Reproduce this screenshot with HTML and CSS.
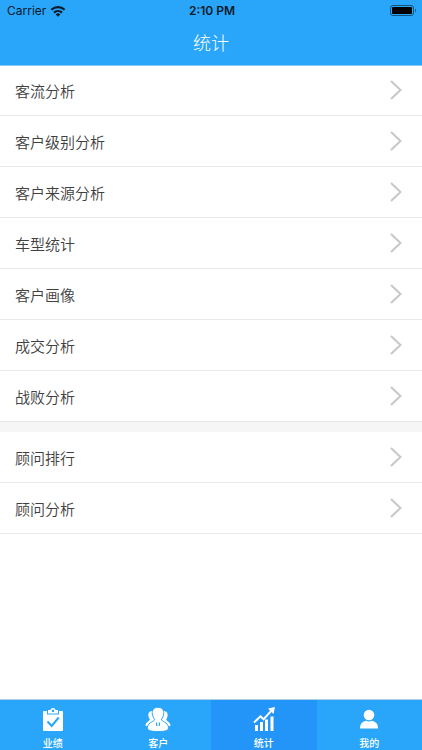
FILE: index.html
```html
<!DOCTYPE html>
<html lang="zh-CN">
<head>
<meta charset="utf-8">
<meta name="viewport" content="width=device-width, initial-scale=1">
<title>统计</title>
<link rel="stylesheet" href="styles.css">
</head>
<body>
<div class="app">
  <header class="header">
    <div class="status">
      <div class="carrier">
        <span>Carrier</span>
        <svg class="wifi" viewBox="0 0 16 12" aria-hidden="true">
          <path d="M1.400 4.800a9.400 9.400 0 0 1 13.200 0M4 7.600a5.800 5.800 0 0 1 8 0" fill="none" stroke="currentColor" stroke-width="2.200"/>
          <path d="M5.700 9.400a3.400 3.400 0 0 1 4.600 0L8 11.700z" fill="currentColor"/>
        </svg>
      </div>
      <time class="clock">2:10 PM</time>
      <svg class="battery" viewBox="0 0 27 12" aria-hidden="true">
        <rect x=".5" y=".5" width="23" height="10" rx="2.500" fill="none" stroke="#000" stroke-opacity=".5"/>
        <rect x="2" y="2" width="20" height="7" rx="1" fill="#000"/>
        <path d="M25 3.700c1.600.6 1.600 3 0 3.600z" fill="#000" fill-opacity=".5"/>
      </svg>
    </div>
    <h1 class="title">统计</h1>
  </header>

  <main class="content">
    <nav class="group">
      <a class="row" href="#flow">客流分析<svg class="chevron" viewBox="0 0 12 20" aria-hidden="true"><path d="M1 1l9.500 9L1 19"/></svg></a>
      <a class="row" href="#level">客户级别分析<svg class="chevron" viewBox="0 0 12 20" aria-hidden="true"><path d="M1 1l9.500 9L1 19"/></svg></a>
      <a class="row" href="#source">客户来源分析<svg class="chevron" viewBox="0 0 12 20" aria-hidden="true"><path d="M1 1l9.500 9L1 19"/></svg></a>
      <a class="row" href="#model">车型统计<svg class="chevron" viewBox="0 0 12 20" aria-hidden="true"><path d="M1 1l9.500 9L1 19"/></svg></a>
      <a class="row" href="#portrait">客户画像<svg class="chevron" viewBox="0 0 12 20" aria-hidden="true"><path d="M1 1l9.500 9L1 19"/></svg></a>
      <a class="row" href="#deal">成交分析<svg class="chevron" viewBox="0 0 12 20" aria-hidden="true"><path d="M1 1l9.500 9L1 19"/></svg></a>
      <a class="row" href="#lost">战败分析<svg class="chevron" viewBox="0 0 12 20" aria-hidden="true"><path d="M1 1l9.500 9L1 19"/></svg></a>
    </nav>
    <nav class="group">
      <a class="row" href="#ranking">顾问排行<svg class="chevron" viewBox="0 0 12 20" aria-hidden="true"><path d="M1 1l9.500 9L1 19"/></svg></a>
      <a class="row" href="#advisor">顾问分析<svg class="chevron" viewBox="0 0 12 20" aria-hidden="true"><path d="M1 1l9.500 9L1 19"/></svg></a>
    </nav>
  </main>

  <nav class="tabs">
    <a class="tab" href="#performance">
      <svg class="icon" viewBox="0 0 26 26" aria-hidden="true">
        <path fill="#fff" d="M4 4h3v3.500h12V4h3q1 0 1 1v18q0 1-1 1H4q-1 0-1-1V5q0-1 1-1z"/>
        <path fill="#fff" fill-rule="evenodd" d="M8 6.500V3h2.300Q11 1 13 1t2.700 2H18v3.500zM13 2.500a1.300 1.300 0 1 0 .01 0z"/>
        <path d="M7.500 14.500l4.200 4.500 7-8.500" fill="none" stroke="#29a6fa" stroke-width="2"/>
      </svg>
      <span>业绩</span>
    </a>
    <a class="tab" href="#customers">
      <svg class="icon" viewBox="0 0 26 26" aria-hidden="true">
        <g fill="#fff">
          <path d="M8 4C4.500 3.700 3 6 3.400 8.600c.1 2 .9 3 1.400 3.900.2 1.600-3.800 2-4.300 5.500 0 .8.500 1.200 1.500 1.200h6l4-6z"/>
          <path d="M18 4c3.500-.3 5 2 4.600 4.600-.1 2-.9 3-1.400 3.900-.2 1.600 3.800 2 4.300 5.500 0 .8-.5 1.200-1.500 1.200h-6l-4-6z"/>
          <path stroke="#29a6fa" d="M13 .3c-4.200 0-6.200 2.900-5.700 6.500.3 2.600 1.300 4.200 2.200 5.400.6 2.400-6.600 2.600-7 8.300 0 3 2.500 4 10.500 4s10.500-1 10.500-4c-.4-5.700-7.600-5.900-7-8.300.9-1.200 1.900-2.800 2.200-5.400.5-3.600-1.500-6.500-5.700-6.500z"/>
        </g>
        <path d="M11.500 15.500l.3 3.500M14.500 15.500l-.3 3.500" stroke="#29a6fa" stroke-width="1.200"/>
      </svg>
      <span>客户</span>
    </a>
    <a class="tab tab-active" href="#stats" aria-current="page">
      <svg class="icon" viewBox="0 0 26 26" aria-hidden="true">
        <path fill="#fff" d="M4 18h3v6H4zM9 15h3v9H9zM14 12.500h3V24h-3zM19.500 9.500h3V24h-3zM17 1.500L24 0l-1.500 7z"/>
        <path d="M3 15.500l6.500-6.200 3 3L21 3" fill="none" stroke="#fff" stroke-width="2"/>
      </svg>
      <span>统计</span>
    </a>
    <a class="tab" href="#me">
      <svg class="icon" viewBox="0 0 26 26" aria-hidden="true">
        <circle cx="13" cy="8" r="5.300" fill="#fff"/>
        <path fill="#fff" d="M4 21.500c0-4.500 2-7 6-7.800q3 1.600 6 0c4 .8 6 3.300 6 7.800z"/>
      </svg>
      <span>我的</span>
    </a>
  </nav>
</div>
</body>
</html>
```
FILE: styles.css
```css
* {
  box-sizing: border-box;
}

body {
  margin: 0;
  background: #fff;
  color: #404040;
  font-family: "Noto Sans CJK SC", sans-serif;
}

a {
  color: inherit;
  text-decoration: none;
}

.app {
  display: flex;
  flex-direction: column;
  min-height: 100vh;
}

.header {
  position: relative;
  background: #29a6fa;
  box-shadow: 0 1px 0 #86ccfb;
}

.status {
  display: grid;
  grid-template-columns: 1fr auto 1fr;
  align-items: center;
  height: 22px;
  padding: 0 5px 0 7px;
  color: #0b1a28;
  font-family: Inter, sans-serif;
  font-size: 12px;
  line-height: 22px;
}

.carrier {
  display: flex;
  align-items: center;
  gap: 4px;
}

.wifi {
  width: 16px;
  height: 12px;
}

.clock {
  font-weight: 600;
}

.battery {
  justify-self: end;
  width: 27px;
  height: 12px;
}

.title {
  margin: 0;
  padding-bottom: 2px;
  color: #fff;
  font-size: 18px;
  font-weight: 300;
  line-height: 41px;
  text-align: center;
}

.content {
  flex: 1;
}

.group + .group {
  border-top: 10px solid #f6f6f6;
}

.row {
  display: flex;
  align-items: center;
  justify-content: space-between;
  height: 51px;
  padding: 0 20px 0 15px;
  border-bottom: 1px solid #e9e9e9;
  font-size: 15px;
  font-weight: 350;
}

.chevron {
  width: 12px;
  height: 20px;
  fill: none;
  stroke: #c7c7cc;
  stroke-width: 2;
}

.tabs {
  position: sticky;
  bottom: 0;
  display: grid;
  grid-template-columns: repeat(4, 1fr);
  border-top: 1px solid #a9cfe8;
}

.tab {
  display: flex;
  flex-direction: column;
  align-items: center;
  gap: 2px;
  height: 50px;
  padding-top: 7px;
  background: #29a6fa;
  color: #fff;
  font-size: 10px;
  font-weight: 500;
  line-height: 15px;
}

.tab-active {
  background: #2495f8;
}

.icon {
  width: 26px;
  height: 26px;
}
```
